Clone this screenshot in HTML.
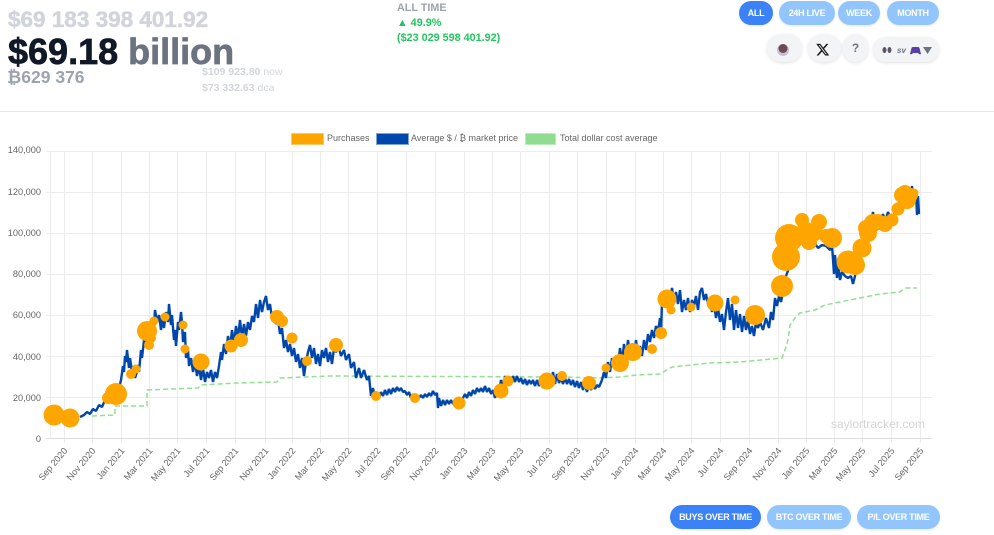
<!DOCTYPE html>
<html><head><meta charset="utf-8">
<style>
html,body{margin:0;padding:0;background:#fff;width:994px;height:535px;overflow:hidden;font-family:"Liberation Sans",sans-serif}
.a{position:absolute;white-space:nowrap}
.b{position:absolute;border-radius:13px;color:#fff;font-weight:700;font-size:9px;letter-spacing:-.3px;text-align:center;background:#93c5fd;box-shadow:0 1px 2px rgba(0,0,0,.1)}
.c{position:absolute;background:#f3f4f6;border-radius:16px;box-shadow:0 1px 3px rgba(0,0,0,.12)}
</style></head><body>
<div class="a" style="left:8px;top:7px;font-size:22.5px;line-height:26px;font-weight:700;color:#d1d5db;-webkit-text-stroke:.5px #d1d5db">$69 183 398 401.92</div>
<div class="a" style="left:8px;top:31px;font-size:36px;line-height:42px;font-weight:700;color:#111827;-webkit-text-stroke:.7px #111827">$69.18 <span style="color:#6b7280;-webkit-text-stroke:.7px #6b7280">billion</span></div>
<div class="a" style="left:7px;top:67px;font-size:17.500px;line-height:21px;font-weight:700;color:#9ca3af">₿629 376</div>
<div class="a" style="left:202px;top:65px;font-size:10.500px;line-height:14px;color:#d1d5db"><b>$109 923.80</b> now</div>
<div class="a" style="left:202px;top:81px;font-size:10.500px;line-height:14px;color:#d1d5db"><b>$73 332.63</b> dca</div>
<div class="a" style="left:397px;top:1px;font-size:10.800px;line-height:14px;font-weight:700;color:#9ca3af">ALL TIME</div>
<div class="a" style="left:397px;top:16px;font-size:10.800px;line-height:14px;font-weight:700;color:#22c55e">▲ 49.9%</div>
<div class="a" style="left:397px;top:31px;font-size:10.800px;line-height:14px;font-weight:700;color:#22c55e">($23 029 598 401.92)</div>

<div class="b" style="left:739px;top:1px;width:34px;height:24px;line-height:25px;background:#3b82f6">ALL</div>
<div class="b" style="left:779px;top:1px;width:56px;height:24px;line-height:25px">24H LIVE</div>
<div class="b" style="left:838px;top:1px;width:42px;height:24px;line-height:25px">WEEK</div>
<div class="b" style="left:887px;top:1px;width:52px;height:24px;line-height:25px">MONTH</div>

<div class="c" style="left:767px;top:34px;width:35px;height:28px"></div>
<div class="c" style="left:808px;top:34px;width:33px;height:28px"></div>
<div class="c" style="left:843px;top:34px;width:25px;height:28px;text-align:center;font-size:12px;line-height:29px;font-weight:700;color:#6b7280">?</div>
<div class="c" style="left:873px;top:37px;width:66px;height:25px"></div>
<svg class="a" style="left:760px;top:30px" width="185" height="36" viewBox="0 0 185 36">
<circle cx="23" cy="20" r="6" fill="#c9bfd9"/><circle cx="23" cy="18.500" r="4.500" fill="#6d4c50"/>
<path transform="translate(55.500,12.500) scale(.6)" fill="#111" d="M18.244 2.25h3.308l-7.227 8.26 8.502 11.24H16.17l-5.214-6.817L4.99 21.75H1.68l7.73-8.835L1.254 2.25H8.08l4.713 6.231zm-1.161 17.52h1.833L7.084 4.126H5.117z"/>
<ellipse cx="124.500" cy="20" rx="2" ry="3" fill="#5b5566"/><ellipse cx="129.500" cy="20" rx="2" ry="3" fill="#5b5566"/>
<text x="137" y="23" font-size="8" font-weight="700" font-style="italic" fill="#6b7280" font-family="Liberation Sans">sv</text>
<path d="M150 24l1.500-6q.5-1 1.500-1h5q1 0 1.500 1l1.500 6q-1.500 1-3-1h-5q-1.500 2-3 1z" fill="#5b3fa8"/>
<path d="M163 17h9l-4.500 7z" fill="#6b7280"/>
</svg>

<div class="a" style="left:0;top:111px;width:994px;height:1px;background:#e5e7eb"></div>

<svg class="a" style="left:0;top:0" width="994" height="535" viewBox="0 0 994 535" font-family="Liberation Sans" font-size="9.200" fill="#666">
<g stroke="#ececec" stroke-width="1" fill="none">
<path d="M46 151.500H932M46 192.500H932M46 233.500H932M46 274.500H932M46 315.500H932M46 356.500H932M46 397.500H932"/>
<path d="M50.500 151V438M64.500 151V443M92.500 151V443M121.500 151V443M149.500 151V443M177.500 151V443M206.500 151V443M235.500 151V443M265.500 151V443M292.500 151V443M320.500 151V443M348.500 151V443M377.500 151V443M406.500 151V443M435.500 151V443M464.500 151V443M492.500 151V443M520.500 151V443M549.500 151V443M577.500 151V443M606.500 151V443M635.500 151V443M663.500 151V443M691.500 151V443M720.500 151V443M749.500 151V443M778.500 151V443M806.500 151V443M834.500 151V443M862.500 151V443M891.500 151V443M920.500 151V443"/>
<path d="M46 438.500H932" stroke="#dcdcdc"/>
</g>
<g text-anchor="end">
<text x="41" y="153">140,000</text><text x="41" y="195">120,000</text><text x="41" y="236">100,000</text><text x="41" y="277">80,000</text><text x="41" y="318">60,000</text><text x="41" y="360">40,000</text><text x="41" y="401">20,000</text><text x="41" y="442">0</text>
<text transform="translate(68,451) rotate(-50)">Sep 2020</text>
<text transform="translate(96,451) rotate(-50)">Nov 2020</text>
<text transform="translate(125,451) rotate(-50)">Jan 2021</text>
<text transform="translate(153,451) rotate(-50)">Mar 2021</text>
<text transform="translate(181,451) rotate(-50)">May 2021</text>
<text transform="translate(210,451) rotate(-50)">Jul 2021</text>
<text transform="translate(239,451) rotate(-50)">Sep 2021</text>
<text transform="translate(269,451) rotate(-50)">Nov 2021</text>
<text transform="translate(296,451) rotate(-50)">Jan 2022</text>
<text transform="translate(324,451) rotate(-50)">Mar 2022</text>
<text transform="translate(352,451) rotate(-50)">May 2022</text>
<text transform="translate(381,451) rotate(-50)">Jul 2022</text>
<text transform="translate(410,451) rotate(-50)">Sep 2022</text>
<text transform="translate(439,451) rotate(-50)">Nov 2022</text>
<text transform="translate(468,451) rotate(-50)">Jan 2023</text>
<text transform="translate(496,451) rotate(-50)">Mar 2023</text>
<text transform="translate(524,451) rotate(-50)">May 2023</text>
<text transform="translate(553,451) rotate(-50)">Jul 2023</text>
<text transform="translate(581,451) rotate(-50)">Sep 2023</text>
<text transform="translate(610,451) rotate(-50)">Nov 2023</text>
<text transform="translate(639,451) rotate(-50)">Jan 2024</text>
<text transform="translate(667,451) rotate(-50)">Mar 2024</text>
<text transform="translate(695,451) rotate(-50)">May 2024</text>
<text transform="translate(724,451) rotate(-50)">Jul 2024</text>
<text transform="translate(753,451) rotate(-50)">Sep 2024</text>
<text transform="translate(782,451) rotate(-50)">Nov 2024</text>
<text transform="translate(810,451) rotate(-50)">Jan 2025</text>
<text transform="translate(838,451) rotate(-50)">Mar 2025</text>
<text transform="translate(866,451) rotate(-50)">May 2025</text>
<text transform="translate(895,451) rotate(-50)">Jul 2025</text>
<text transform="translate(924,451) rotate(-50)">Sep 2025</text>
</g>
<text x="831" y="428" font-size="12" fill="#d4d4d4">saylortracker.com</text>

<path fill="none" stroke="#90e090" stroke-width="1.500" stroke-dasharray="5 3" d="M92 416L115 415V406L147 406V390L198 388L201 385L237 383L277 382L280 378L330 376L563 377L597 378L620 377L637 375L660 374L672 367L710 363L740 362L782 358L785 350L788 340L790 325L795 318L800 313L815 310L825 305L840 302L860 298L880 294L900 292L905 288L917 288"/>

<path fill="none" stroke="#0047ab" stroke-width="2.400" stroke-linejoin="bevel" d="M80 417L84 415L87 412L90 414L93 409L96 411L99 405L102 407L105 400L108 401L112 396L116 392L119 388L121 380L123 366L124 372L125 356L126 362L127 350L129 368L130 358L132 372L134 366L135 378L137 372L138 365L139 372L141 350L142 358L144 340L146 345L148 325L150 335L152 318L154 326L155 310L157 322L159 315L161 330L162 318L164 328L166 312L168 322L169 304L171 325L172 315L174 340L175 330L176 346L178 322L179 330L181 312L182 322L183 342L185 332L186 358L188 350L189 366L191 358L193 372L195 362L197 376L199 366L201 380L203 368L205 382L207 372L209 378L211 370L213 382L215 372L217 378L219 366L221 352L222 360L224 344L226 354L228 336L230 348L232 330L234 344L236 326L238 338L240 320L242 338L244 324L246 336L248 322L250 330L252 316L254 322L256 304L258 318L260 300L262 312L264 302L266 296L268 310L270 304L272 318L274 312L276 324L278 320L280 334L282 328L284 348L286 340L288 352L290 344L292 356L294 348L296 362L298 354L300 368L302 358L304 376L306 362L308 352L310 345L312 358L314 348L316 364L318 354L320 366L322 350L324 358L326 348L328 362L330 352L332 364L334 348L336 352L339 348L341 356L344 350L346 360L349 354L351 368L354 362L356 378L359 368L361 378L364 370L367 380L369 376L371 396L373 388L375 400L377 394L379 398L381 392L383 396L385 390L387 395L389 389L391 394L393 388L395 392L397 387L399 391L401 388L403 392L405 391L407 395L409 392L411 398L413 394L415 399L417 395L419 398L421 395L423 398L425 394L427 397L429 393L431 396L433 391L435 395L437 393L438 408L439 398L441 406L443 400L445 405L447 400L449 404L451 400L453 404L455 401L457 403L459 399L461 401L463 398L465 394L467 398L469 392L471 396L473 390L475 394L477 388L479 392L481 388L483 392L485 386L487 392L489 388L491 394L493 390L495 398L497 388L499 392L501 380L503 386L505 376L507 384L509 378L511 384L513 376L515 382L517 376L519 382L521 378L523 384L525 379L527 385L529 380L531 384L533 380L535 386L537 380L539 386L541 382L543 388L545 382L547 386L549 378L551 386L553 372L555 384L557 374L559 383L561 378L563 384L565 378L567 384L569 379L571 385L573 380L575 387L577 381L579 388L581 382L583 390L585 384L587 392L589 384L591 390L593 385L595 389L597 385L599 387L602 380L604 372L606 378L608 362L610 372L612 358L614 366L616 356L618 366L620 348L622 362L624 344L626 358L628 340L630 354L632 346L634 356L636 340L638 358L640 346L642 356L644 340L646 350L648 334L650 342L652 330L654 338L656 326L658 332L660 318L661 336L662 300L664 292L666 304L668 290L670 300L672 288L674 300L676 292L678 304L680 290L682 312L684 300L686 310L688 298L690 312L692 300L694 306L696 296L698 310L700 292L702 288L704 300L706 294L708 304L710 298L712 312L714 304L716 318L718 308L720 322L722 314L724 330L726 312L728 298L730 320L732 304L734 330L736 310L738 328L740 314L742 332L744 316L746 330L748 320L750 334L752 326L754 336L756 322L758 328L760 322L763 330L766 318L769 328L771 312L773 320L775 298L777 306L779 296L781 302L783 292L786 276L789 268L791 258L794 245L798 238L802 234L806 240L810 245L814 242L818 248L822 245L826 246L830 250L832 245L834 274L835 255L837 278L838 262L840 280L842 272L845 276L848 278L851 276L853 284L855 276L858 262L862 250L866 240L870 230L873 212L875 225L878 215L880 222L883 214L885 222L888 212L891 220L894 214L897 208L900 200L903 188L905 202L908 190L910 204L912 186L914 200L916 192L917 215L918 196L919 214"/>

<g fill="#ffa500">
<circle cx="54" cy="415" r="10.500"/><circle cx="70" cy="418" r="9.500"/><circle cx="108" cy="398" r="6"/><circle cx="116" cy="394" r="11"/><circle cx="131" cy="374" r="5"/><circle cx="136" cy="369" r="4.500"/><circle cx="147" cy="331" r="10"/><circle cx="149" cy="345" r="5"/><circle cx="151" cy="338" r="5"/><circle cx="154" cy="321" r="4.500"/><circle cx="165" cy="317" r="4.500"/><circle cx="183" cy="325" r="4.500"/><circle cx="185" cy="349" r="4.500"/><circle cx="201" cy="362" r="8.500"/><circle cx="231" cy="346" r="6.500"/><circle cx="241" cy="340" r="7"/><circle cx="277" cy="317" r="7"/><circle cx="282" cy="321" r="6"/><circle cx="292" cy="338" r="5.500"/><circle cx="307" cy="361" r="5"/><circle cx="336" cy="345" r="7"/><circle cx="376" cy="396" r="5"/><circle cx="415" cy="398" r="5"/><circle cx="459" cy="403" r="6.500"/><circle cx="501" cy="391" r="7.500"/><circle cx="508" cy="381" r="5.500"/><circle cx="547" cy="381" r="8.500"/><circle cx="562" cy="376" r="5"/><circle cx="589" cy="383" r="7"/><circle cx="606" cy="368" r="4.500"/><circle cx="620" cy="363" r="9"/><circle cx="633" cy="352" r="9"/><circle cx="652" cy="349" r="5"/><circle cx="661" cy="333" r="6"/><circle cx="667" cy="299" r="9.500"/><circle cx="671" cy="310" r="4.500"/><circle cx="691" cy="307" r="4.500"/><circle cx="715" cy="303" r="8.500"/><circle cx="735" cy="300" r="4.500"/><circle cx="755" cy="315" r="10"/><circle cx="782" cy="286" r="11"/><circle cx="786" cy="257" r="14"/><circle cx="789" cy="238" r="14"/><circle cx="802" cy="220" r="7"/><circle cx="800" cy="237" r="7"/><circle cx="806" cy="232" r="10"/><circle cx="809" cy="242" r="8"/><circle cx="811" cy="233" r="9"/><circle cx="819" cy="222" r="8"/><circle cx="815" cy="233" r="8"/><circle cx="832" cy="238" r="10"/><circle cx="826" cy="236" r="7"/><circle cx="848" cy="262" r="11.500"/><circle cx="855" cy="265" r="10"/><circle cx="862" cy="248" r="9.500"/><circle cx="868" cy="233" r="9"/><circle cx="866" cy="228" r="8"/><circle cx="873" cy="223" r="9"/><circle cx="878" cy="222" r="8"/><circle cx="885" cy="224" r="8"/><circle cx="892" cy="220" r="6.500"/><circle cx="898" cy="209" r="6.500"/><circle cx="902" cy="195" r="8"/><circle cx="905" cy="193" r="8"/><circle cx="907" cy="200" r="9"/><circle cx="908" cy="195" r="7"/><circle cx="911" cy="195" r="7"/><circle cx="914" cy="193" r="4.500"/>
</g>

<rect x="291.500" y="133.500" width="32" height="11" fill="#ffa500" stroke="#ffc766"/>
<text x="327" y="141" font-size="9">Purchases</text>
<rect x="376.500" y="133.500" width="32" height="11" fill="#0047ab" stroke="#7fa3d5"/>
<text x="411" y="141" font-size="9">Average $ / ₿ market price</text>
<rect x="525.500" y="133.500" width="30" height="11" fill="#90dc90" stroke="#b5e8b5" stroke-dasharray="3 2"/>
<text x="560" y="141" font-size="9">Total dollar cost average</text>
</svg>

<div class="b" style="left:670px;top:505px;width:91px;height:24px;line-height:25px;background:#3b82f6">BUYS OVER TIME</div>
<div class="b" style="left:767px;top:505px;width:84px;height:24px;line-height:25px">BTC OVER TIME</div>
<div class="b" style="left:857px;top:505px;width:83px;height:24px;line-height:25px">P/L OVER TIME</div>
</body></html>
